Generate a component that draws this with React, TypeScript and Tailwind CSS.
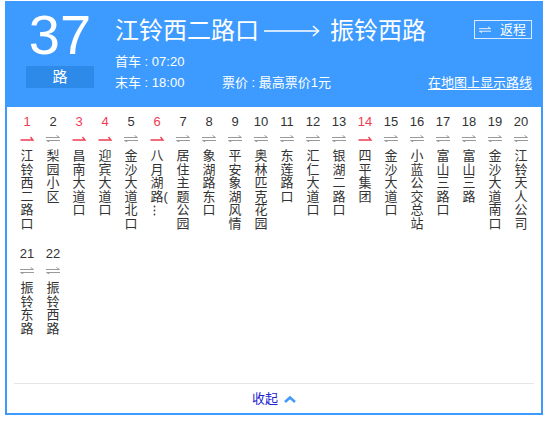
import React from "react";

type Stop = { no: number; name: string; red?: boolean };

const stops: Stop[] = [
  { no: 1, name: "江铃西二路口", red: true },
  { no: 2, name: "梨园小区" },
  { no: 3, name: "昌南大道口", red: true },
  { no: 4, name: "迎宾大道口", red: true },
  { no: 5, name: "金沙大道北口" },
  { no: 6, name: "八月湖路(", red: true },
  { no: 7, name: "居住主题公园" },
  { no: 8, name: "象湖路东口" },
  { no: 9, name: "平安象湖风情" },
  { no: 10, name: "奥林匹克花园" },
  { no: 11, name: "东莲路口" },
  { no: 12, name: "汇仁大道口" },
  { no: 13, name: "银湖二路口" },
  { no: 14, name: "四平集团", red: true },
  { no: 15, name: "金沙大道口" },
  { no: 16, name: "小蓝公交总站" },
  { no: 17, name: "富山三路口" },
  { no: 18, name: "富山三路" },
  { no: 19, name: "金沙大道南口" },
  { no: 20, name: "江铃天人公司" },
  { no: 21, name: "振铃东路" },
  { no: 22, name: "振铃西路" },
];

function BothWays({ color = "#9a9a9a", w = 14 }: { color?: string; w?: number }) {
  return (
    <svg width={w} height="7" viewBox="0 0 14 7" fill="none" stroke={color} strokeWidth="1">
      <path d="M0 2.5H13.5L10.5 0.5" />
      <path d="M14 5.5H0.5L3.5 7" />
    </svg>
  );
}

function OneWay() {
  return (
    <svg width="14" height="7" viewBox="0 0 14 7" fill="none" stroke="#f03c52" strokeWidth="1.3">
      <path d="M0.5 5H13L10.5 2" />
    </svg>
  );
}

function StopName({ stop }: { stop: Stop }) {
  const chars = Array.from(stop.name);
  // 八月湖路( 被截断，后面是竖排省略号
  if (stop.no === 6) {
    return (
      <div className="mt-[7px] flex w-[13px] flex-col">
        {["八", "月", "湖"].map((c) => (
          <span key={c} className="leading-[13.6px]">{c}</span>
        ))}
        <span className="whitespace-nowrap leading-[13.6px]">路(</span>
        <svg className="ml-[2px] mt-[2px]" width="3" height="11" viewBox="0 0 3 11" fill="#444">
          <circle cx="1.5" cy="1.5" r="0.9" />
          <circle cx="1.5" cy="5.5" r="0.9" />
          <circle cx="1.5" cy="9.5" r="0.9" />
        </svg>
      </div>
    );
  }
  return (
    <div className="mt-[7px] flex w-[13px] flex-col">
      {chars.map((c, i) => (
        <span key={i} className="leading-[13.6px]">{c}</span>
      ))}
    </div>
  );
}

export default function App() {
  return (
    <div className="bg-white pl-[5px] pt-[1px] font-['Liberation_Sans','Noto_Sans_CJK_SC',sans-serif]">
      <div className="flex h-[414px] w-[538px] flex-col border-2 border-[#3d9bff] bg-white">
        <header className="flex h-[104px] bg-[#3d9bff] pr-[9px] text-white">
          <div className="ml-[19px] flex w-[68px] flex-col items-center pt-[4px]">
            <div className="text-[56px] leading-[56px]">37</div>
            <div className="mt-[3px] flex h-[22px] w-[68px] items-center justify-center bg-[#2e8ae9] text-[15px]">
              路
            </div>
          </div>

          <div className="ml-[21px] flex flex-1 flex-col pt-[16px]">
            <div className="flex items-start justify-between">
              <div className="flex h-[24px] items-center text-[24px] leading-[24px]">
                <span>江铃西二路口</span>
                <svg className="ml-[5px] mr-[10px]" width="56" height="12" viewBox="0 0 56 12" fill="none" stroke="white" strokeWidth="1.6">
                  <path d="M0 6H54" />
                  <path d="M49 1L54.5 6L49 11" />
                </svg>
                <span>振铃西路</span>
              </div>
              <button
                type="button"
                className="mt-[1px] flex h-[19px] w-[58px] items-center border border-[#d8ebff] pl-[4px] text-[13px] leading-none text-white"
              >
                <BothWays color="white" w={12} />
                <span className="ml-[9px]">返程</span>
              </button>
            </div>
            <div className="mt-[8px] text-[13px] leading-[21px]">首车 : 07:20</div>
            <div className="flex justify-between text-[13px] leading-[21px]">
              <div className="flex">
                <span className="w-[107px]">末车 : 18:00</span>
                <span>票价 : 最高票价1元</span>
              </div>
              <a href="#" className="underline underline-offset-2">在地图上显示路线</a>
            </div>
          </div>
        </header>

        <div className="grid h-[276px] grid-cols-[repeat(20,26px)] auto-rows-[132px] content-start px-[7px] text-[13px] text-[#333]">
          {stops.map((s) => (
            <div key={s.no} className="flex flex-col items-center pt-[7px]">
              <div className={`leading-[16px] ${s.red ? "text-[#f03c52]" : "text-[#333]"}`}>{s.no}</div>
              <div className="mt-[4px] flex h-[8px] items-center">
                {s.red ? <OneWay /> : <BothWays />}
              </div>
              <StopName stop={s} />
            </div>
          ))}
        </div>

        <div className="mx-[7px] flex flex-1 items-center justify-center border-t border-[#e6e6e6] text-[13px]">
          <span className="text-[#2323d0]">收起</span>
          <svg className="ml-[6px]" width="12" height="8" viewBox="0 0 12 8" fill="none" stroke="#3d9bff" strokeWidth="2.5">
            <path d="M1 7L6 2.5L11 7" />
          </svg>
        </div>
      </div>
    </div>
  );
}
